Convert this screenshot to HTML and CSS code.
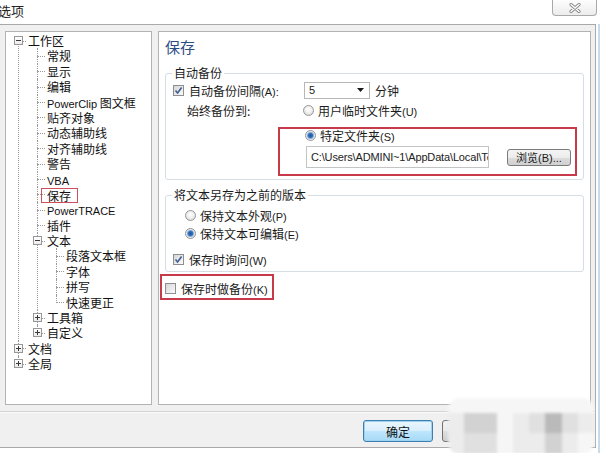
FILE: index.html
```html
<!DOCTYPE html>
<html lang="zh-CN">
<head>
<meta charset="utf-8">
<title>选项</title>
<link rel="stylesheet" href="styles.css">
</head>
<body>
<div class="window">
  <div class="titlebar">
    <span class="title">选项</span>
    <div class="close">
      <svg width="12" height="10" viewBox="0 0 12 10"><path d="M2 1.5 L10 8.5 M10 1.5 L2 8.5" stroke="#8a8a8a" stroke-width="3.2" stroke-linecap="round"/><path d="M2 1.5 L10 8.5 M10 1.5 L2 8.5" stroke="#ffffff" stroke-width="1.4" stroke-linecap="round"/></svg>
    </div>
  </div>
  <div class="main">
    <div class="dialog">
      <div class="panes">
        <div class="tree-pane">
          <ul class="tree">
            <li>
              <div class="row"><span class="exp minus"></span>工作区</div>
              <ul>
                <li><div class="row">常规</div></li>
                <li><div class="row">显示</div></li>
                <li><div class="row">编辑</div></li>
                <li><div class="row"><span class="lat">PowerClip</span> 图文框</div></li>
                <li><div class="row">贴齐对象</div></li>
                <li><div class="row">动态辅助线</div></li>
                <li><div class="row">对齐辅助线</div></li>
                <li><div class="row">警告</div></li>
                <li><div class="row"><span class="lat">VBA</span></div></li>
                <li><div class="row"><span class="sel">保存</span></div></li>
                <li><div class="row"><span class="lat">PowerTRACE</span></div></li>
                <li><div class="row">插件</div></li>
                <li>
                  <div class="row"><span class="exp minus"></span>文本</div>
                  <ul>
                    <li><div class="row">段落文本框</div></li>
                    <li><div class="row">字体</div></li>
                    <li><div class="row">拼写</div></li>
                    <li><div class="row">快速更正</div></li>
                  </ul>
                </li>
                <li><div class="row"><span class="exp plus"></span>工具箱</div></li>
                <li><div class="row"><span class="exp plus"></span>自定义</div></li>
              </ul>
            </li>
            <li><div class="row"><span class="exp plus"></span>文档</div></li>
            <li><div class="row"><span class="exp plus"></span>全局</div></li>
          </ul>
        </div>
        <div class="content-pane">
          <h1 class="heading">保存</h1>
          <fieldset class="group g1">
            <legend>自动备份</legend>
            <div class="row1">
              <label class="lbl-interval"><span class="cb on"><svg width="9" height="9" viewBox="0 0 9 9"><path d="M1.5 4.5 L3.6 7 L7.6 1.6" fill="none" stroke="#3d5f92" stroke-width="1.6"/></svg></span><span>自动备份间隔<span class="lat">(A):</span></span></label>
              <div class="select"><span class="sel-val">5</span><svg width="7" height="4" viewBox="0 0 7 4"><path d="M0 0 H7 L3.5 4 Z" fill="#1a1a1a"/></svg></div>
              <span class="unit">分钟</span>
            </div>
            <div class="row2">
              <span class="lbl-to">始终备份到:</span>
              <label class="opt"><span class="rb"></span><span>用户临时文件夹<span class="lat">(U)</span></span></label>
            </div>
            <div class="redbox rb1">
              <label class="opt opt-s"><span class="rb on"></span><span>特定文件夹<span class="lat">(S)</span></span></label>
              <div class="pathrow">
                <div class="path">C:\Users\ADMINI~1\AppData\Local\Temp</div>
                <button class="browse">浏览<span class="lat">(B)...</span></button>
              </div>
            </div>
          </fieldset>
          <fieldset class="group g2">
            <legend>将文本另存为之前的版本</legend>
            <label class="opt r-p"><span class="rb"></span><span>保持文本外观<span class="lat">(P)</span></span></label>
            <label class="opt r-e"><span class="rb on"></span><span>保持文本可编辑<span class="lat">(E)</span></span></label>
            <label class="chk c-w"><span class="cb on"><svg width="9" height="9" viewBox="0 0 9 9"><path d="M1.5 4.5 L3.6 7 L7.6 1.6" fill="none" stroke="#3d5f92" stroke-width="1.6"/></svg></span><span>保存时询问<span class="lat">(W)</span></span></label>
          </fieldset>
          <div class="redbox rb2">
            <label class="chk"><span class="cb"></span><span>保存时做备份<span class="lat">(K)</span></span></label>
          </div>
        </div>
      </div>
      <div class="sep"></div>
      <div class="buttons">
        <button class="btn default">确定</button>
        <button class="btn">取消</button>
        <button class="btn">帮助</button>
      </div>
    </div>
    <div class="edge"></div>
  </div>
  <div class="mosaic">
    <i class="m0"></i><i class="m0"></i><i class="m0"></i><i class="m0"></i><i class="m0"></i><i class="m0"></i><i class="m0"></i><i class="m0"></i><i class="m0"></i>
    <i class="m1"></i><i class="m3"></i><i class="m3"></i><i class="m0"></i><i class="m1"></i><i class="m2"></i><i class="m4"></i><i class="m2"></i><i class="m1"></i>
    <i class="m1"></i><i class="m2"></i><i class="m2"></i><i class="m0"></i><i class="m1"></i><i class="m1"></i><i class="m3"></i><i class="m1"></i><i class="m0"></i>
  </div>
</div>
</body>
</html>
```

FILE: styles.css
```css
* { box-sizing: border-box; }

body {
  margin: 0;
  width: 600px;
  height: 453px;
  overflow: hidden;
  background: #ffffff;
  font-family: "Noto Sans CJK SC", "Noto Sans", sans-serif;
  font-size: 12px;
  color: #1c1c1c;
}

.window {
  position: relative;
  width: 600px;
  height: 453px;
  display: flex;
  flex-direction: column;
}

.titlebar {
  height: 24px;
  flex: none;
  display: flex;
  justify-content: space-between;
  align-items: flex-start;
  padding-right: 3px;
}

.title {
  margin-left: -2px;
  margin-top: 3px;
  font-size: 13px;
  line-height: 16px;
  color: #222;
}

.close {
  width: 45px;
  height: 16px;
  border: 1px solid #a9a9a9;
  border-top: none;
  border-radius: 0 0 4px 4px;
  background: linear-gradient(#fdfdfd, #ececec);
  display: flex;
  align-items: center;
  justify-content: center;
}

.main {
  display: flex;
  flex: 1;
  align-items: flex-start;
  height: 429px;
}

.dialog {
  width: 596px;
  height: 424px;
  flex: none;
  border: 1px solid #a9a9a9;
  border-left: none;
  background: #f0f0f0;
  display: flex;
  flex-direction: column;
}

.edge {
  flex: 1;
  height: 429px;
  border-right: 2px solid #c6dced;
}

.panes {
  display: flex;
  gap: 6px;
  padding: 6px 4px 0 5px;
  height: 380px;
  flex: none;
}

.tree-pane {
  width: 147px;
  flex: none;
  border: 1px solid #b3b3b3;
  background: #ffffff;
  padding-top: 1px;
}

.content-pane {
  flex: 1;
  border: 1px solid #b3b3b3;
  background: #ffffff;
  padding: 5px 6px 0 6px;
}

/* tree */
.tree, .tree ul {
  list-style: none;
  margin: 0;
  padding: 0;
}
.tree { margin-left: 12px; }
.tree ul { margin-left: 19px; }

.tree li {
  position: relative;
}
.tree li::before {
  content: "";
  position: absolute;
  left: 0;
  top: 0;
  bottom: 0;
  border-left: 1px dotted #9a9a9a;
}
.tree li:last-child::before {
  bottom: auto;
  height: 8px;
}
.tree > li:first-child::before {
  top: 8px;
}
.tree li::after {
  content: "";
  position: absolute;
  left: 0;
  top: 7.5px;
  width: 8px;
  border-top: 1px dotted #9a9a9a;
}

.row {
  height: 15.4px;
  line-height: 15.4px;
  padding-left: 10px;
  white-space: nowrap;
  color: #111;
}

.lat {
  font-family: "Liberation Sans", "Noto Sans", sans-serif;
  font-size: 11px;
}

.exp {
  position: absolute;
  z-index: 1;
  left: -4px;
  top: 3px;
  width: 9px;
  height: 9px;
  border: 1px solid #979797;
  background: linear-gradient(#ffffff, #ececec);
}
.exp::before {
  content: "";
  position: absolute;
  left: 1px;
  top: 3px;
  width: 5px;
  height: 1px;
  background: #3a3a3a;
}
.exp.plus::after {
  content: "";
  position: absolute;
  left: 3px;
  top: 1px;
  width: 1px;
  height: 5px;
  background: #3a3a3a;
}

.sel {
  display: inline-block;
  line-height: 13px;
  margin-left: -6px;
  padding: 0 6px 0 5px;
  width: 37px;
  border: 1px solid #cf4f5c;
  vertical-align: top;
  margin-top: 1px;
}

/* content */
.heading {
  margin: 0;
  font-size: 15px;
  font-weight: normal;
  line-height: 20px;
  color: #2c4c84;
}

.group {
  margin: 0;
  min-width: 0;
  border: 1px solid #d5dee4;
  border-radius: 3px;
  padding: 0 0 3px 0;
}
.group legend {
  margin-left: 6px;
  padding: 0 2px;
  line-height: 16px;
  font-size: 12px;
  color: #1a1a1a;
}
.g1 { margin-top: 8px; }
.g2 { margin-top: 7px; padding-bottom: 5px; }

.cb {
  width: 11px;
  height: 11px;
  flex: none;
  border: 1px solid #8f8f8f;
  background: linear-gradient(135deg, #d6d6d6, #fbfbfb);
  display: inline-flex;
  align-items: center;
  justify-content: center;
}
.rb {
  width: 11px;
  height: 11px;
  flex: none;
  border-radius: 50%;
  border: 1px solid #959595;
  background: radial-gradient(circle at 50% 40%, #ffffff 0, #f2f2f2 40%, #d2d2d2 100%);
}
.rb.on {
  background: radial-gradient(circle, #1f5aa0 0, #2d6cb5 2px, #8fb6e0 3.2px, #e8e8e8 4px, #f4f4f4 100%);
}

.row1 {
  display: flex;
  align-items: center;
  height: 18px;
  padding-left: 7px;
}
.lbl-interval {
  width: 131px;
  display: flex;
  align-items: center;
  gap: 5px;
  white-space: nowrap;
}
.select {
  width: 66px;
  height: 17px;
  border: 1px solid #b7b7b7;
  background: #fff;
  display: flex;
  align-items: center;
  justify-content: space-between;
  padding: 0 5px 0 4px;
}
.sel-val {
  font-family: "Liberation Sans", sans-serif;
  font-size: 11px;
}
.unit { margin-left: 5px; }

.row2 {
  display: flex;
  align-items: center;
  height: 16px;
  margin-top: 3px;
  padding-left: 21px;
}
.lbl-to { width: 116px; }

.opt, .chk {
  display: flex;
  align-items: center;
  gap: 4px;
  white-space: nowrap;
}
.chk { gap: 5px; }

.redbox {
  border: 2px solid #c83a49;
}
.rb1 {
  margin: 9px 6px 0 112px;
  padding: 0 0 6px 25px;
}
.opt-s { height: 12px; margin-top: 0; }
.pathrow {
  display: flex;
  align-items: center;
  margin-top: 5px;
}
.path {
  width: 183px;
  height: 22px;
  margin-left: 1px;
  border: 1px solid #c4c4c4;
  background: #fff;
  padding-left: 4px;
  line-height: 20px;
  font-family: "Liberation Sans", sans-serif;
  font-size: 11px;
  letter-spacing: -0.15px;
  white-space: nowrap;
  overflow: hidden;
  color: #222;
}
.browse {
  margin-left: 18px;
  width: 64px;
  height: 17px;
  padding: 0;
  border: 1px solid #7b7b7b;
  border-radius: 3px;
  background: linear-gradient(#f4f4f4 0, #ececec 50%, #dcdcdc 51%, #d0d0d0 100%);
  font-family: "Noto Sans CJK SC", sans-serif;
  font-size: 11px;
  line-height: 14px;
  color: #1a1a1a;
}

.r-p { height: 14px; margin-top: 5px; padding-left: 19px; }
.r-e { height: 14px; margin-top: 4px; padding-left: 19px; }
.c-w { height: 14px; margin-top: 12px; padding-left: 7px; }

.rb2 {
  display: inline-flex;
  align-items: center;
  margin: 2px 0 0 -5px;
  height: 26px;
  padding: 2px 4px 0 3px;
}

/* bottom */
.sep {
  margin-top: 6px;
  height: 2px;
  flex: none;
  border-top: 1px solid #d4d4d4;
  border-bottom: 1px solid #fbfbfb;
}
.buttons {
  flex: 1;
  display: flex;
  justify-content: flex-end;
  align-items: flex-start;
  gap: 9px;
  padding: 7px 4px 0 0;
}
.btn {
  width: 70px;
  height: 22px;
  padding: 0;
  border: 1px solid #707070;
  border-radius: 3px;
  background: linear-gradient(#f2f2f2 0, #ebebeb 50%, #dddddd 51%, #cfcfcf 100%);
  font-family: "Noto Sans CJK SC", sans-serif;
  font-size: 12px;
  color: #111;
}
.btn.default {
  border-color: #3c7fb1;
  background: linear-gradient(#eaf6fd 0, #d9effc 50%, #bee6fd 51%, #a7d9f5 100%);
  box-shadow: inset 0 0 0 1px #9ed2f0;
}

/* blurred watermark */
.mosaic {
  position: absolute;
  left: 448px;
  top: 398px;
  width: 146px;
  height: 56px;
  display: grid;
  grid-template-columns: repeat(9, 1fr);
  grid-template-rows: 15px 20px 21px;
  border-radius: 12px;
  overflow: hidden;
  filter: blur(1.5px);
}
.mosaic i { display: block; }
.m0 { background: #f6f6f6; }
.m1 { background: #ececec; }
.m2 { background: #e0e0e0; }
.m3 { background: #d2d2d2; }
.m4 { background: #bababa; }
```
